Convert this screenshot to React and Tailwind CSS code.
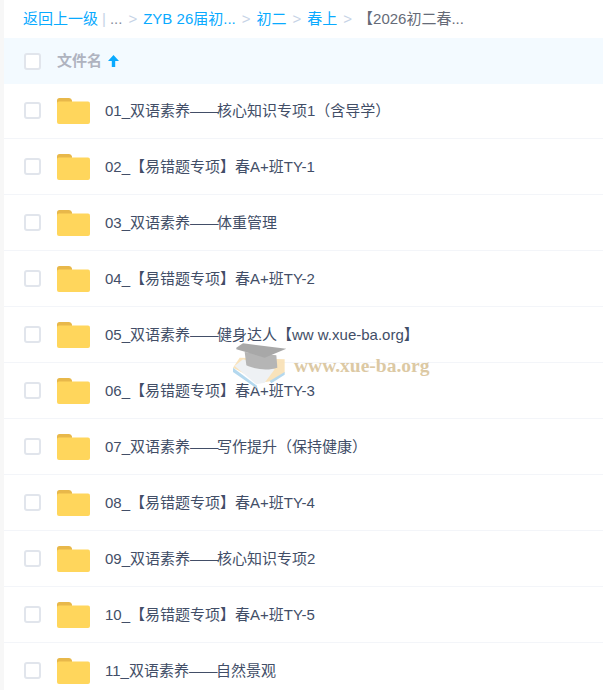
const names = [
  "01_双语素养——核心知识专项1（含导学）",
  "02_【易错题专项】春A+班TY-1",
  "03_双语素养——体重管理",
  "04_【易错题专项】春A+班TY-2",
  "05_双语素养——健身达人【ww w.xue-ba.org】",
  "06_【易错题专项】春A+班TY-3",
  "07_双语素养——写作提升（保持健康）",
  "08_【易错题专项】春A+班TY-4",
  "09_双语素养——核心知识专项2",
  "10_【易错题专项】春A+班TY-5",
  "11_双语素养——自然景观",
];

function Folder() {
  return (
    <svg width="33" height="26" viewBox="0 0 33 26" className="shrink-0">
      <path d="M0 2.5A2.5 2.5 0 0 1 2.5 0H12a3 3 0 0 1 3 2.5V6H0Z" fill="#e8b84a" />
      <rect x="0" y="3.5" width="33" height="22.5" rx="2" fill="#ffd65c" />
    </svg>
  );
}

function Check({ row }) {
  return <span className={`block w-[17px] h-[17px] rounded-[3px] border-2 border-[#e1e5ec] bg-white shrink-0 ${row ? "mb-px" : ""}`} />;
}

function Sep() {
  return <span className="text-[#c6d3e6] mx-[6px]">&gt;</span>;
}

function Name({ text }) {
  const parts = text.split("——");
  if (parts.length === 1) return <span className="ml-[15px] whitespace-nowrap">{text}</span>;
  return (
    <span className="ml-[15px] whitespace-nowrap">
      {parts[0]}
      <span className="tracking-[-1.5px]">——</span>
      {parts[1]}
    </span>
  );
}

export default function App() {
  return (
    <div className="relative w-[603px] h-[690px] overflow-hidden bg-white text-[15px] font-['Liberation_Sans','Noto_Sans_CJK_SC',sans-serif]">
      <div className="ml-1">
        <div className="h-[38px] flex items-center pl-[19px] whitespace-pre text-[#09aaff]">
          <span>返回上一级</span>
          <span className="text-[#c6d3e6] ml-[4px]">|</span>
          <span className="text-[#878c9c] ml-[4px]">...</span>
          <Sep />
          <span>ZYB 26届初...</span>
          <Sep />
          <span>初二</span>
          <Sep />
          <span>春上</span>
          <Sep />
          <span className="text-[#666b78]">【2026初二春...</span>
        </div>
        <div className="h-[46px] flex items-center bg-[#f3faff] pl-5">
          <Check />
          <span className="ml-4 font-bold text-[#afb3bf]">文件名</span>
          <svg width="13" height="14" viewBox="0 0 13 14" className="ml-[5px]">
            <path d="M6.5 1 1 7H4.8V13H8.2V7H12Z" fill="#09aaff" />
          </svg>
        </div>
        {names.map((n, i) => (
          <div key={n} className={`${i === 0 ? "h-[55px]" : "h-14 pt-px"} flex items-center pl-5 border-b border-[#f3f5f9] text-[#424e67]`}>
            <Check row />
            <span className="ml-4 flex"><Folder /></span>
            <Name text={n} />
          </div>
        ))}
      </div>
      <div className="absolute left-0 top-0 w-1 h-full bg-[#f7f7f7]" />
      <div className="absolute left-[228px] top-[336px] flex items-start">
        <svg width="64" height="56" viewBox="0 0 192 168">
          <path d="M15 95 35 65 170 70 170 110 130 135 100 140Z" fill="#f8e0b4" fillOpacity="0.9" />
          <path d="M20 90 45 70 140 100 110 140 85 145Z" fill="#eef1f4" />
          <path d="M15 95 85 148 90 160 15 108Z" fill="#b4d8ee" />
          <path d="M125 135 170 108 170 116 130 142Z" fill="#b4d8ee" />
          <path d="M50 48 145 58 148 95C120 105 80 100 55 88Z" fill="#b5b5b5" />
          <path d="M25 35 45 22 175 38 110 65 25 40Z" fill="#a8a8a8" />
        </svg>
        <span className="ml-[2px] mt-4 leading-7 font-['Liberation_Serif',serif] font-bold text-[19.5px] text-[#dcc9a4]">www.xue-ba.org</span>
      </div>
    </div>
  );
}
